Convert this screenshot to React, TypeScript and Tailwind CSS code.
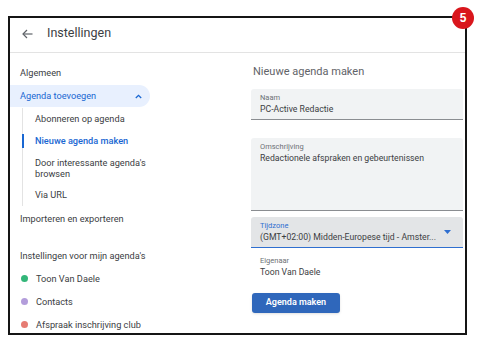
import React from 'react';

const subItems = [
  { label: 'Abonneren op agenda', active: false },
  { label: 'Nieuwe agenda maken', active: true },
  { label: "Door interessante agenda's browsen", active: false },
  { label: 'Via URL', active: false },
];

const calendars = [
  { name: 'Toon Van Daele', color: 'bg-[#33b679]' },
  { name: 'Contacts', color: 'bg-[#b39ddb]' },
  { name: 'Afspraak inschrijving club', color: 'bg-[#e67c73]' },
];

const Field: React.FC<{ label: string; value: string; tall?: boolean; focused?: boolean }> = ({
  label,
  value,
  tall,
  focused,
}) => (
  <div
    className={`relative rounded-t-[3px] pl-[9px] pt-[4px] ${
      tall ? 'h-[73px]' : 'h-[31px]'
    } ${
      focused
        ? 'bg-[#e3e5e7] border-b-[1.5px] border-[#2f6fd0]'
        : 'bg-[#f1f3f4] border-b border-[#8a8d91]'
    }`}
  >
    <div className={`text-[7.5px] leading-[10px] ${focused ? 'text-[#2f6fd0]' : 'text-[#6d7175]'}`}>{label}</div>
    <div className="text-[8.7px] leading-[13px] text-[#3c4043]">{value}</div>
    {focused && (
      <svg className="absolute right-[12px] top-[13px]" width="7" height="4" viewBox="0 0 7 4">
        <path d="M0 0 L7 0 L3.5 4 Z" fill="#2f6fd0" />
      </svg>
    )}
  </div>
);

export default function App() {
  return (
    <div className="relative w-[486px] h-[339px] bg-white pt-[16px] pl-[8px] font-['Roboto',sans-serif]">
      <div className="w-[459px] h-[319px] border-2 border-[#151515] overflow-hidden flex flex-col">
        <div className="h-[35px] shrink-0 border-b border-[#e3e3e3] flex items-center pl-[12px] pb-[3px]">
          <svg width="11" height="10" viewBox="0 0 11 10" fill="none" stroke="#5f6368" strokeWidth="1.2">
            <path d="M10.5 5 H1" />
            <path d="M5 1 L1 5 L5 9" />
          </svg>
          <span className="ml-[14px] text-[12.5px] text-[#3c4043] leading-none">Instellingen</span>
        </div>
        <div className="flex flex-1">
          <div className="w-[233px] shrink-0 pt-[9px] text-[9.2px] text-[#3c4043]">
            <div className="h-[22px] flex items-center pl-[10px]">Algemeen</div>
            <div className="mt-[1px] h-[22px] w-[140px] flex items-center justify-between pl-[10px] pr-[8px] rounded-r-full bg-[#e8f0fe] text-[#1967d2]">
              <span>Agenda toevoegen</span>
              <svg width="7" height="5" viewBox="0 0 7 5" fill="none" stroke="#1967d2" strokeWidth="1.3">
                <path d="M0.8 4 L3.5 1.3 L6.2 4" />
              </svg>
            </div>
            <div className="mt-[1px] ml-[12px] w-[128px] border-l border-[#e3e3e3]">
              {subItems.map((item) => (
                <div
                  key={item.label}
                  className={`relative flex items-center pl-[12px] ${
                    item.label.length > 25 ? 'h-[32px] leading-[11px]' : 'h-[22px]'
                  } ${item.active ? 'text-[#1967d2] font-medium' : ''}`}
                >
                  {item.active && <div className="absolute left-[-1px] top-[4px] bottom-[4px] w-[1.5px] bg-[#1967d2]" />}
                  {item.label}
                </div>
              ))}
            </div>
            <div className="mt-[2px] h-[22px] flex items-center pl-[10px]">Importeren en exporteren</div>
            <div className="mt-[15px] h-[22px] flex items-center pl-[10px]">Instellingen voor mijn agenda's</div>
            {calendars.map((c) => (
              <div key={c.name} className="h-[23px] flex items-center pl-[10px]">
                <span className={`w-[7px] h-[7px] rounded-full ${c.color} ml-[1px] mr-[8px]`} />
                {c.name}
              </div>
            ))}
          </div>
          <div className="flex-1 pl-[8px] pr-[2px]">
            <div className="mt-[10px] h-[18px] flex items-center pl-[2px] text-[11px] text-[#5f6368]">Nieuwe agenda maken</div>
            <div className="mt-[8px]">
              <Field label="Naam" value="PC-Active Redactie" />
            </div>
            <div className="mt-[18px]">
              <Field label="Omschrijving" value="Redactionele afspraken en gebeurtenissen" tall />
            </div>
            <div className="mt-[6px]">
              <Field label="Tijdzone" value="(GMT+02:00) Midden-Europese tijd - Amster..." focused />
            </div>
            <div className="pl-[9px] pt-[8px]">
              <div className="text-[7.5px] leading-[10px] text-[#6d7175]">Eigenaar</div>
              <div className="text-[8.7px] leading-[13px] text-[#3c4043]">Toon Van Daele</div>
            </div>
            <button className="mt-[14px] ml-[1px] w-[88px] h-[20px] rounded-[3px] bg-[#2f67bb] text-white text-[9px] font-semibold shadow-sm">
              Agenda maken
            </button>
          </div>
        </div>
      </div>
      <div className="absolute left-[452px] top-[7px] w-[22px] h-[22px] rounded-full bg-[#d9161c] flex items-center justify-center text-white text-[12px] font-bold font-['Liberation_Sans',sans-serif]">
        5
      </div>
    </div>
  );
}
